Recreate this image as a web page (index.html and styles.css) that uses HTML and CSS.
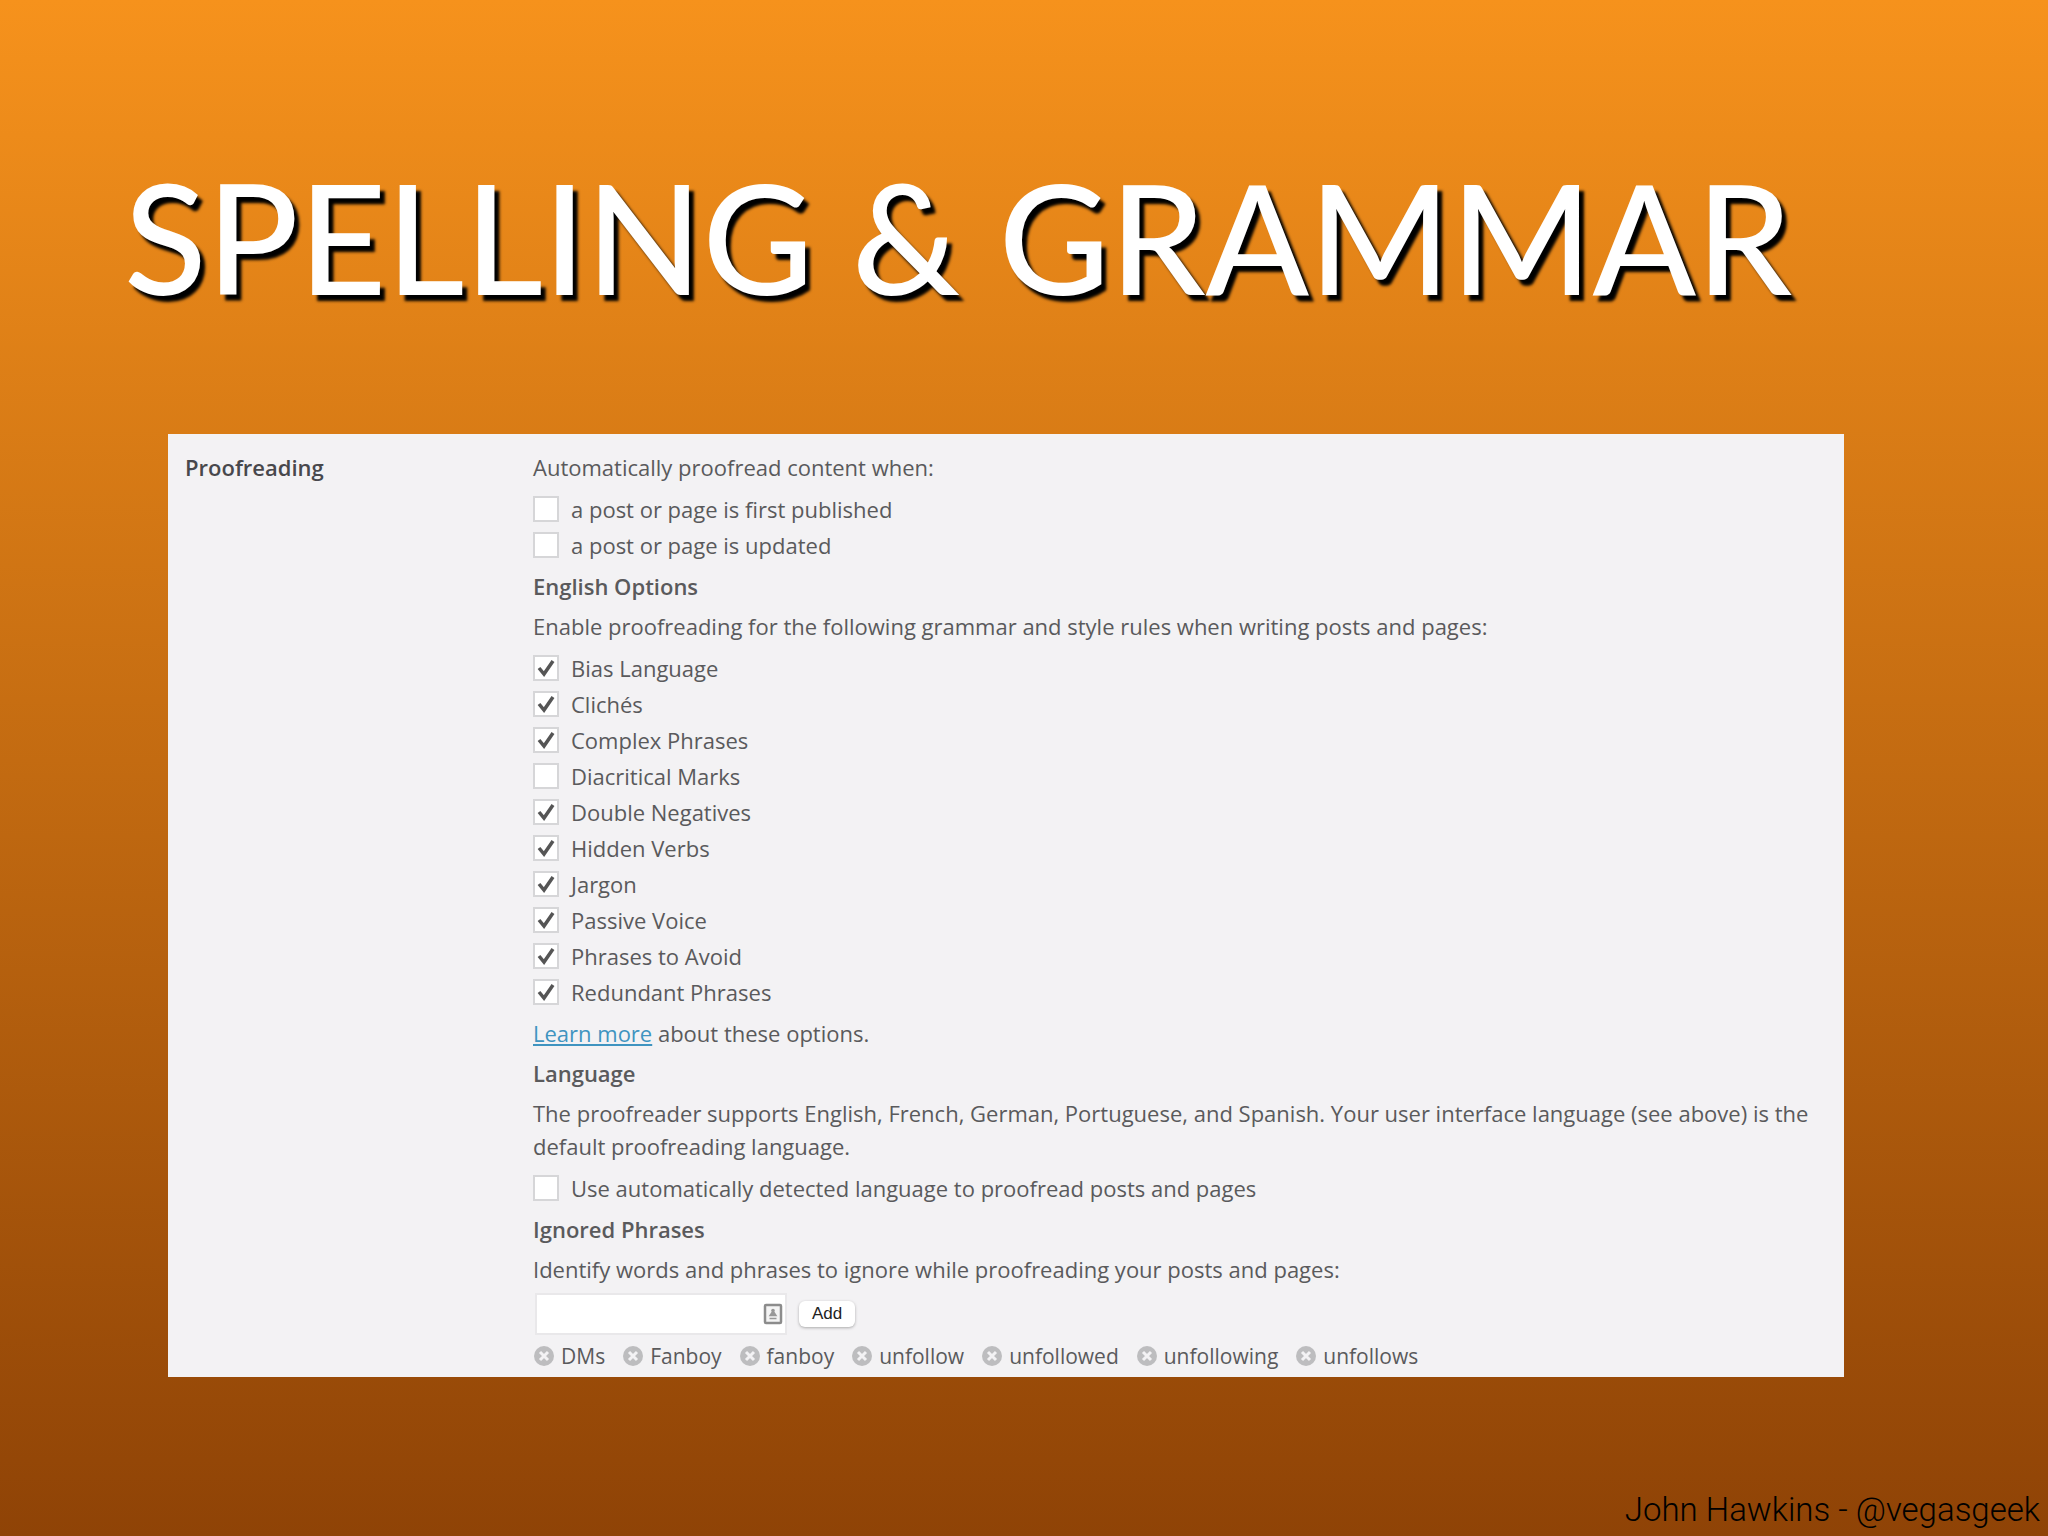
FILE: index.html
```html
<!DOCTYPE html>
<html lang="en">
<head>
  <meta charset="UTF-8">
  <meta name="viewport" content="width=device-width, initial-scale=1.0">
  <title>Spelling &amp; Grammar</title>
  <link rel="stylesheet" href="styles.css">
</head>
<body>
  <div class="slide">
    <h1>SPELLING &amp; GRAMMAR</h1>

    <!-- Proofreading Settings -->
    <main class="panel">
      <h2>Proofreading</h2>
      <form class="settings">
        <p>Automatically proofread content when:</p>
        <div class="options">
          <label><input type="checkbox"> a post or page is first published</label>
          <label><input type="checkbox"> a post or page is updated</label>
        </div>

        <h3>English Options</h3>
        <p>Enable proofreading for the following grammar and style rules when writing posts and pages:</p>
        <div class="options">
          <label><input type="checkbox" checked> Bias Language</label>
          <label><input type="checkbox" checked> Clichés</label>
          <label><input type="checkbox" checked> Complex Phrases</label>
          <label><input type="checkbox"> Diacritical Marks</label>
          <label><input type="checkbox" checked> Double Negatives</label>
          <label><input type="checkbox" checked> Hidden Verbs</label>
          <label><input type="checkbox" checked> Jargon</label>
          <label><input type="checkbox" checked> Passive Voice</label>
          <label><input type="checkbox" checked> Phrases to Avoid</label>
          <label><input type="checkbox" checked> Redundant Phrases</label>
        </div>
        <p><a href="#">Learn more</a> about these options.</p>

        <h3>Language</h3>
        <p>The proofreader supports English, French, German, Portuguese, and Spanish. Your user interface language (see above) is the default proofreading language.</p>
        <div class="options">
          <label><input type="checkbox"> Use automatically detected language to proofread posts and pages</label>
        </div>

        <h3>Ignored Phrases</h3>
        <p><label for="phrase">Identify words and phrases to ignore while proofreading your posts and pages:</label></p>
        <div class="add-row">
          <div class="phrase-box">
            <input type="text" id="phrase">
            <svg class="card-icon" viewBox="0 0 20 22" aria-hidden="true">
              <rect x="2" y="2" width="16" height="18" rx="1" fill="#f4f4f4" stroke="#8c8c8c" stroke-width="2.5"/>
              <circle cx="10" cy="7.5" r="1.8" fill="#999"/>
              <path d="M10 8l3 4.5H7zM6.5 15.5h7" fill="#999" stroke="#999" stroke-width="1.5"/>
            </svg>
          </div>
          <button type="button" class="add-btn">Add</button>
        </div>
        <ul class="phrases">
          <li><button type="button" class="remove" aria-label="Remove DMs"><svg viewBox="0 0 20 20"><circle cx="10" cy="10" r="10"/><path d="M6 6l8 8M14 6l-8 8"/></svg></button>DMs</li>
          <li><button type="button" class="remove" aria-label="Remove Fanboy"><svg viewBox="0 0 20 20"><circle cx="10" cy="10" r="10"/><path d="M6 6l8 8M14 6l-8 8"/></svg></button>Fanboy</li>
          <li><button type="button" class="remove" aria-label="Remove fanboy"><svg viewBox="0 0 20 20"><circle cx="10" cy="10" r="10"/><path d="M6 6l8 8M14 6l-8 8"/></svg></button>fanboy</li>
          <li><button type="button" class="remove" aria-label="Remove unfollow"><svg viewBox="0 0 20 20"><circle cx="10" cy="10" r="10"/><path d="M6 6l8 8M14 6l-8 8"/></svg></button>unfollow</li>
          <li><button type="button" class="remove" aria-label="Remove unfollowed"><svg viewBox="0 0 20 20"><circle cx="10" cy="10" r="10"/><path d="M6 6l8 8M14 6l-8 8"/></svg></button>unfollowed</li>
          <li><button type="button" class="remove" aria-label="Remove unfollowing"><svg viewBox="0 0 20 20"><circle cx="10" cy="10" r="10"/><path d="M6 6l8 8M14 6l-8 8"/></svg></button>unfollowing</li>
          <li><button type="button" class="remove" aria-label="Remove unfollows"><svg viewBox="0 0 20 20"><circle cx="10" cy="10" r="10"/><path d="M6 6l8 8M14 6l-8 8"/></svg></button>unfollows</li>
        </ul>
      </form>
    </main>

    <footer>John Hawkins - @vegasgeek</footer>
  </div>
</body>
</html>
```
FILE: styles.css
```css
* {
  box-sizing: border-box;
}

body {
  margin: 0;
  font-family: "Open Sans", sans-serif;
  font-size: 22px;
  line-height: 33px;
  color: #5a5a5c;
}

.slide {
  display: flex;
  flex-direction: column;
  min-height: 100vh;
  background: linear-gradient(#f6921c, #8f4306);
}

h1 {
  margin: 0;
  padding: 138px 124px 100px;
  font-family: Lato, sans-serif;
  font-size: 152px;
  font-weight: 500;
  line-height: 196px;
  color: #fff;
  text-shadow: 5px 6px 3px #000;
}

h2, h3, p {
  margin: 0;
  font-size: 22px;
  font-weight: 400;
}

h2, h3 {
  font-weight: 600;
}

h2 {
  color: #48484c;
}

.panel {
  display: grid;
  grid-template-columns: 348px 1fr;
  margin: 0 204px 0 168px;
  padding: 17px 17px 7px;
  background: #f3f2f4;
}

.settings {
  display: flex;
  flex-direction: column;
  gap: 7px;
}

.options label {
  display: flex;
  align-items: center;
  gap: 12px;
  height: 36px;
}

.options input {
  width: 26px;
  height: 26px;
  margin: 0;
  appearance: none;
  background: #fff center no-repeat;
  border: 2px solid #d6d6d8;
}

/* Check mark */
.options input:checked {
  background-image: url("data:image/svg+xml,%3Csvg xmlns='http://www.w3.org/2000/svg' width='20' height='20'%3E%3Cpath d='M3 10l5 6 9-13' fill='none' stroke='%23555' stroke-width='3.5'/%3E%3C/svg%3E");
}

a {
  color: #3f94c0;
}

.add-row {
  display: flex;
  align-items: center;
  gap: 12px;
  padding-left: 2px;
}

.phrase-box {
  position: relative;
  width: 252px;
  height: 42px;
}

.phrase-box input {
  width: 100%;
  height: 100%;
  padding: 4px 36px 4px 8px;
  font: inherit;
  background: #fff;
  border: 2px solid #e9e8ea;
}

.card-icon {
  position: absolute;
  top: 10px;
  right: 4px;
  width: 20px;
  height: 22px;
}

.add-btn {
  width: 56px;
  height: 26px;
  padding: 0;
  font-family: "Liberation Sans", sans-serif;
  font-size: 17px;
  line-height: 24px;
  color: #222;
  background: #fff;
  border: 0;
  border-radius: 6px;
  box-shadow: 0 1px 3px #aaa;
}

.phrases {
  display: flex;
  flex-wrap: wrap;
  gap: 18px;
  margin: 0;
  padding: 0 0 0 1px;
  font-size: 21px;
  line-height: 28px;
  list-style: none;
}

.phrases li {
  display: flex;
  align-items: center;
  gap: 7px;
}

.remove {
  width: 20px;
  height: 20px;
  padding: 0;
  background: none;
  border: 0;
}

.remove svg {
  display: block;
}

.remove circle {
  fill: #bdbdbf;
}

.remove path {
  stroke: #f3f2f4;
  stroke-width: 3;
}

footer {
  margin-top: auto;
  padding: 0 8px 6px;
  font-family: Roboto, sans-serif;
  font-size: 33px;
  font-weight: 300;
  line-height: 40px;
  text-align: right;
  color: #000;
}
```
